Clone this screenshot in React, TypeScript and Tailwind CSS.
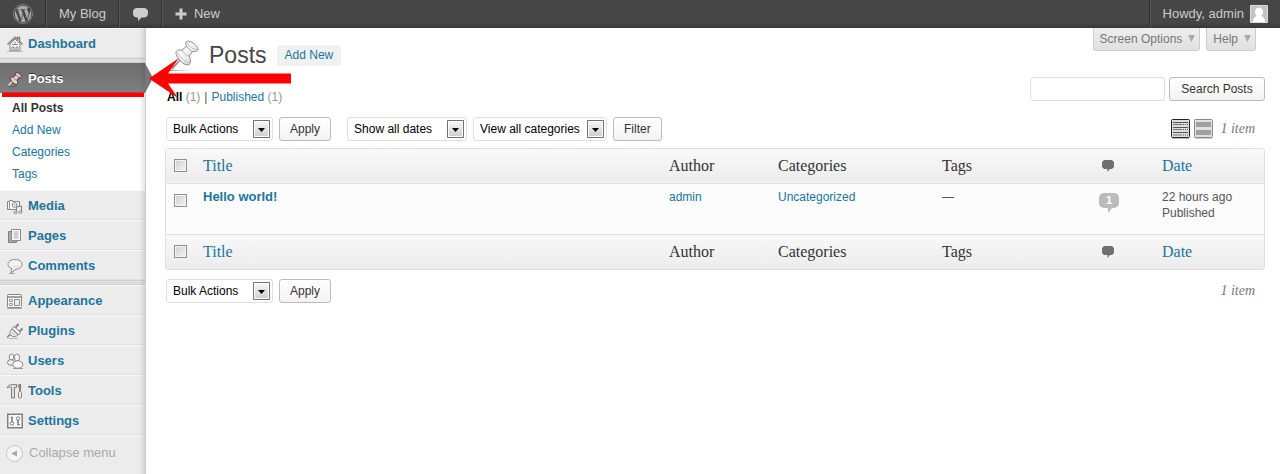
import React from 'react';
import { FaWordpress } from 'react-icons/fa';

const iconClass = 'h-4 w-4 shrink-0 overflow-visible';

const pinHead =
  'M7 13.500c0-2.500 3.500-3 6-2.300l4.500-4C16 5 16.500 3 18 2.300c3.500-1.300 10.500 4 11 8 .1 2-3 2.700-5.500 2.200L20 17c2 3 1.800 7.500 0 8.700-5 1.500-13-6.700-13-12.200z';

const icons: Record<string, React.ReactNode> = {
  Dashboard: (
    <>
      <path d="M3 8v7h10V8L8 3z" fill="#f6f6f6" stroke="#888" />
      <path d="M.5 8.500 8 1.200l2.500 2.400V1.500h2v4l3 3" stroke="#808080" strokeWidth="1.500" />
      <path d="M5 15v-4h2v4M9 15v-4h2v4M5 8.500h6M8 5.500v3" stroke="#888" />
      <path d="M0 15.500h16" stroke="#bbb" />
    </>
  ),
  Posts: (
    <>
      <path d="m1.500 14.500 5-5.500" stroke="#f0e0dd" strokeWidth="1.300" />
      <g transform="translate(0 .5) scale(.5)">
        <path d={pinHead} fill="#ecd2cd" stroke="#4a3836" strokeWidth="2" />
        <path d="M18 6c2 4 5 6 9 6M13 12c1.500 3 4 5 6.500 5.500" stroke="#6e5955" strokeWidth="1.500" />
      </g>
      <path d="M1 15.500h9" stroke="#444" opacity=".4" />
    </>
  ),
  Media: (
    <>
      <path d="M.5 3.500h2v-1h3v1h7v8h-12z" fill="#f5f5f5" stroke="#888" />
      <path d="M2.500 4v7" stroke="#999" />
      <circle cx="7.500" cy="7" r="2.300" fill="#fff" stroke="#888" />
      <circle cx="7.500" cy="7" r=".8" fill="#888" />
      <path d="M9.500 14.500V9l5-1v5.500" fill="#eee" stroke="#808080" />
      <ellipse cx="8.500" cy="14.500" rx="1.600" ry="1.200" fill="#eee" stroke="#808080" />
      <ellipse cx="13.500" cy="14" rx="1.600" ry="1.200" fill="#eee" stroke="#808080" />
    </>
  ),
  Pages: (
    <>
      <path d="M1.500 3.500h8v11h-8z" fill="#aaa" stroke="#808080" />
      <path d="M4.500 1.500h9v11h-9z" fill="#fbfbfb" stroke="#888" />
      <path d="M6.500 4h5M6.500 6h5M6.500 8h5M6.500 10h5" stroke="#a6a6a6" />
    </>
  ),
  Comments: (
    <>
      <path d="M8 1.500c4.200 0 7 2 7 4.800s-2.600 4.700-6 4.900L4 15l.9-4.300C2.400 9.900 1 8.300 1 6.300c0-2.800 2.800-4.800 7-4.800z" fill="#f3f3f3" stroke="#888" />
      <path d="M3 7c1.500 2 7 2 10 0-1 3-8 3.500-10 0z" fill="#d2d2d2" />
      <path d="M2 15.500h6" stroke="#aaa" />
    </>
  ),
  Appearance: (
    <>
      <rect x=".5" y="1.500" width="14" height="13" rx="1" fill="#fafafa" stroke="#858585" />
      <path d="M1 4h13" stroke="#858585" strokeWidth="1.500" />
      <path d="M2.500 6.500h3v2h-3zM2.500 10.500h3v2h-3z" stroke="#999" />
      <path d="M7.500 6.500h5v6h-5z" fill="#eee" stroke="#8b8b8b" />
      <path d="M0 15.500h15" stroke="#aaa" />
    </>
  ),
  Plugins: (
    <>
      <path d="M.5 15C1 12 2 12.500 4 11.500" stroke="#888" strokeWidth="1.500" />
      <path d="m5 6 6 6c-2 2-5 2-7 .5S3.200 8 5 6z" fill="#eee" stroke="#808080" />
      <path d="m5 5.500 2-2 6.500 6-2 2.500z" fill="#fafafa" stroke="#808080" />
      <path d="m8.500 4.500 3-3.500M12.500 8.500l3-3" stroke="#858585" strokeWidth="2" />
      <path d="m5 9 3 3M7 7l3.500 3.500" stroke="#aaa" />
      <path d="M2 15.500h9" stroke="#bbb" />
    </>
  ),
  Users: (
    <>
      <ellipse cx="4.500" cy="4" rx="2.300" ry="3" fill="#f5f5f5" stroke="#888" />
      <ellipse cx="4" cy="9.500" rx="3.500" ry="2.800" fill="#f0f0f0" stroke="#888" />
      <ellipse cx="10" cy="4.500" rx="2.600" ry="3.500" fill="#fafafa" stroke="#888" />
      <ellipse cx="10.800" cy="11.500" rx="5" ry="3.800" fill="#f6f6f6" stroke="#888" />
      <path d="M6 15.500h10" stroke="#999" />
    </>
  ),
  Tools: (
    <>
      <path d="M.5 4c1-2 3-2.500 9-2.500v3H7.500V15h-3V4.500C3 4 2 4 .5 5z" fill="#ddd" stroke="#808080" />
      <path d="M13 1v7" stroke="#808080" strokeWidth="2" />
      <path d="M10.500 2h1v2h3" stroke="#888" />
      <rect x="11.500" y="8.500" width="3" height="6.500" rx="1" fill="#eee" stroke="#858585" />
    </>
  ),
  Settings: (
    <>
      <rect x=".75" y="1.250" width="14.500" height="13.500" fill="#fafafa" stroke="#808080" strokeWidth="1.500" />
      <path d="M5 3.500v6M11 7v5.500" stroke="#777" strokeWidth="1.500" />
      <circle cx="5" cy="10.500" r="1.700" fill="#fff" stroke="#777" />
      <circle cx="11" cy="5.500" r="1.700" fill="#fff" stroke="#777" />
      <path d="M3.500 4.500h1M11 11.500h2" stroke="#888" />
    </>
  ),
};

function MenuIcon({ name }: { name: string }) {
  return (
    <svg viewBox="0 0 16 16" fill="none" className={iconClass} aria-hidden="true">
      {icons[name]}
    </svg>
  );
}

function MenuItem({ name }: { name: string }) {
  return (
    <li>
      <a
        href="#"
        className="flex h-[30px] items-center gap-[5px] border-t border-b border-t-[#f9f9f9] border-b-[#dfdfdf] pt-[2px] pl-[7px] text-[13px] font-bold text-[#21759b]"
      >
        <MenuIcon name={name} />
        {name}
      </a>
    </li>
  );
}

function Separator() {
  return <li className="h-[5px] border-y border-[#cfcfcf] bg-[#dfdfdf]" aria-hidden="true" />;
}

function Sidebar() {
  return (
    <nav className="relative w-[146px] shrink-0 border-r border-[#ccc] bg-[#ececec] text-[13px]">
      <ul>
        <MenuItem name="Dashboard" />
        <Separator />
        <li className="relative">
          <a
            href="#"
            className="relative flex h-[30px] items-center gap-[5px] bg-linear-to-b from-[#6d6d6d] to-[#808080] pt-[2px] pl-[7px] font-bold text-white [text-shadow:0_-1px_0_#333]"
          >
            <MenuIcon name="Posts" />
            Posts
          </a>
          <svg viewBox="0 0 8 30" className="absolute top-0 left-full z-20 h-[30px] w-2" aria-hidden="true">
            <path d="M0 0 8 15 0 30z" fill="#777" />
          </svg>
          <ul className="bg-white pt-1 pb-[5px] text-xs leading-[22px] text-[#21759b]">
            <li>
              <a href="#" className="block pl-3 font-bold text-[#333]">All Posts</a>
            </li>
            <li>
              <a href="#" className="block pl-3">Add New</a>
            </li>
            <li>
              <a href="#" className="block pl-3">Categories</a>
            </li>
            <li>
              <a href="#" className="block pl-3">Tags</a>
            </li>
          </ul>
        </li>
        <MenuItem name="Media" />
        <MenuItem name="Pages" />
        <MenuItem name="Comments" />
        <Separator />
        <MenuItem name="Appearance" />
        <MenuItem name="Plugins" />
        <MenuItem name="Users" />
        <MenuItem name="Tools" />
        <MenuItem name="Settings" />
      </ul>
      <button type="button" className="flex h-[35px] w-full items-center gap-[6px] border-t border-[#f9f9f9] pl-[6px] text-[#aaa]">
        <svg viewBox="0 0 17 17" className="h-[17px] w-[17px]" aria-hidden="true">
          <circle cx="8.500" cy="8.500" r="8" fill="#f5f5f5" stroke="#c4c4c4" />
          <path d="M5 8.500 11 5.500v6z" fill="#aaa" />
        </svg>
        Collapse menu
      </button>
      <div className="pointer-events-none absolute inset-y-0 right-0 w-[6px] bg-linear-to-r from-transparent to-black/10" />
    </nav>
  );
}

function AdminBar() {
  return (
    <header className="flex h-7 items-stretch bg-linear-to-b from-[#464646] from-80% to-[#373737] text-[13px] text-[#ccc]">
      <a href="#" aria-label="About WordPress" className="flex w-[46px] items-center justify-center border-r border-[#333] text-[#aaa]">
        <FaWordpress size={20} />
      </a>
      <a href="#" className="flex items-center border-r border-l border-r-[#333] border-l-[#555] px-3">
        My Blog
      </a>
      <a href="#" aria-label="Comments" className="flex w-[43px] items-center justify-center border-r border-l border-r-[#333] border-l-[#555]">
        <svg viewBox="0 0 15 13" className="h-[13px] w-[15px]" fill="#ccc" aria-hidden="true">
          <path d="M4 0h7c2 0 4 1.600 4 4v1.500c0 2.400-2 4-4 4H8.500L5 13V9.500H4c-2.300 0-4-1.600-4-4V4c0-2.400 1.700-4 4-4z" />
        </svg>
      </a>
      <a href="#" className="flex items-center gap-[7px] border-l border-[#555] px-3">
        <svg viewBox="0 0 12 12" className="h-3 w-3" aria-hidden="true">
          <path d="M6 .5v11M.5 6h11" stroke="#ccc" strokeWidth="3" />
        </svg>
        New
      </a>
      <a href="#" className="ml-auto flex items-center gap-[6px] border-l border-[#333] pr-3 pl-[13px] shadow-[inset_1px_0_0_#555]">
        Howdy, admin
        <svg viewBox="0 0 18 18" className="h-[18px] w-[18px]" aria-hidden="true">
          <path d="M.5.5h17v17H.5z" fill="#c3c3c3" stroke="#ddd" />
          <ellipse cx="9" cy="7" rx="4" ry="4.500" fill="#fff" />
          <path d="M3 17c0-4 2-5.500 4-6h4c2 .5 4 2 4 6z" fill="#fff" />
        </svg>
      </a>
    </header>
  );
}

function ArrowButton() {
  return (
    <svg viewBox="0 0 17 18" className="pointer-events-none absolute top-[3px] right-[3px] h-[18px] w-[17px]" aria-hidden="true">
      <defs>
        <linearGradient id="arrow-face" x1="0" y1="0" x2="0" y2="1">
          <stop offset="0" stopColor="#f4f4f4" />
          <stop offset="1" stopColor="#cfcfcf" />
        </linearGradient>
      </defs>
      <path d="M.5.500h16v17H.5z" fill="#fff" stroke="#707070" />
      <path d="M2 2h13v14H2z" fill="url(#arrow-face)" />
      <path d="M5 8h7l-3.500 4z" fill="#000" />
    </svg>
  );
}

function Dropdown({ label, name, width }: { label: string; name: string; width: string }) {
  return (
    <span className={`relative h-6 ${width}`}>
      <select
        aria-label={name}
        className="block h-6 w-full appearance-none rounded-[3px] border border-[#dfdfdf] bg-white pl-[6px] text-xs text-black"
      >
        <option>{label}</option>
      </select>
      <ArrowButton />
    </span>
  );
}

function Button({ children }: { children: React.ReactNode }) {
  return (
    <button
      type="button"
      className="h-6 rounded-[3px] border border-[#bbb] bg-linear-to-b from-white to-[#f3f3f3] px-[10px] text-xs whitespace-nowrap text-[#333]"
    >
      {children}
    </button>
  );
}

function CheckBox({ label }: { label: string }) {
  return (
    <input
      type="checkbox"
      aria-label={label}
      className="block h-[13px] w-[13px] appearance-none border border-[#8e8f8f] bg-linear-to-br from-[#c9cdd5] to-[#f6f6f6] shadow-[inset_0_0_0_1px_#f4f4f4]"
    />
  );
}

function HeadRow({ bottom = false }: { bottom?: boolean }) {
  return (
    <tr
      className={
        bottom
          ? 'h-[35px] bg-linear-to-b from-[#f9f9f9] to-[#ececec] text-left'
          : 'h-[34px] border-b border-[#dfdfdf] bg-linear-to-b from-[#f9f9f9] to-[#ececec] text-left'
      }
    >
      <th className="pl-2">
        <CheckBox label="Select all" />
      </th>
      <th className="pl-2 font-normal">
        <a href="#" className="text-[#21759b]">Title</a>
      </th>
      <th className="pl-2 font-normal">Author</th>
      <th className="pl-2 font-normal">Categories</th>
      <th className="pl-2 font-normal">Tags</th>
      <th className="pl-3">
        <svg viewBox="0 0 12 12" className="h-3 w-3" fill="#707070" role="img" aria-label="Comments">
          <path d="M2 0h8l2 2v5l-2 2H8l-2.500 3V9H2L0 7V2z" />
        </svg>
      </th>
      <th className="pl-2 font-normal">
        <a href="#" className="text-[#21759b]">Date</a>
      </th>
    </tr>
  );
}

function PostsTable() {
  return (
    <div className="mt-[7px] overflow-hidden rounded-[3px] border border-[#dfdfdf] bg-[#fcfcfc]">
      <table className="w-full table-fixed border-collapse">
        <colgroup>
          <col className="w-[29px]" />
          <col />
          <col className="w-[109px]" />
          <col className="w-[164px]" />
          <col className="w-[156px]" />
          <col className="w-[64px]" />
          <col className="w-[110px]" />
        </colgroup>
        <thead className="font-['Liberation_Serif',serif] text-base leading-5">
          <HeadRow />
        </thead>
        <tbody className="text-xs leading-4">
          <tr className="h-[51px] border-b border-[#dfdfdf] align-top">
            <td className="pt-[10px] pl-2">
              <CheckBox label="Select Hello world!" />
            </td>
            <td className="pt-[5px] pl-2 text-[13px]">
              <a href="#" className="font-bold text-[#21759b]">Hello world!</a>
            </td>
            <td className="pt-[5px] pl-2">
              <a href="#" className="text-[#21759b]">admin</a>
            </td>
            <td className="pt-[5px] pl-2">
              <a href="#" className="text-[#21759b]">Uncategorized</a>
            </td>
            <td className="pt-[5px] pl-2 text-[#555]">—</td>
            <td className="pt-[9px] pl-[9px]">
              <a href="#" className="relative flex h-[15px] w-5 justify-center rounded-[5px] bg-[#bbb] text-[11px] leading-[15px] font-bold text-white">
                1
                <svg viewBox="0 0 5 5" className="absolute top-full left-[9px] h-[5px] w-[5px]" aria-hidden="true">
                  <path d="M0 0h4L0 5z" fill="#bbb" />
                </svg>
              </a>
            </td>
            <td className="pt-[5px] pl-2 text-[#555]">
              22 hours ago
              <br />
              Published
            </td>
          </tr>
        </tbody>
        <tfoot className="font-['Liberation_Serif',serif] text-base leading-5">
          <HeadRow bottom />
        </tfoot>
      </table>
    </div>
  );
}

function ItemCount() {
  return <span className="font-['Liberation_Serif',serif] text-sm text-[#777] italic">1 item</span>;
}

function PinIcon() {
  return (
    <svg viewBox="0 0 32 32" className="mt-[11px] h-8 w-8" fill="none" aria-hidden="true">
      <defs>
        <linearGradient id="pin-body" x1="0" y1="0" x2="1" y2="1">
          <stop offset="0" stopColor="#fff" />
          <stop offset=".6" stopColor="#eee" />
          <stop offset="1" stopColor="#bbb" />
        </linearGradient>
        <linearGradient id="pin-shadow" x1="0" y1="0" x2="1" y2="0">
          <stop offset="0" stopColor="#999" />
          <stop offset="1" stopColor="#fff" />
        </linearGradient>
      </defs>
      <path d="M1 31h22v1H1z" fill="url(#pin-shadow)" />
      <path d="m3 30 9-10" stroke="#888" strokeWidth="1.500" />
      <path d={pinHead} fill="url(#pin-body)" stroke="#8c8c8c" />
      <path d="M17.500 7c2 3 4 5 6.500 5.500" stroke="#a5a5a5" />
      <path d="M18.500 4c1.500 3.500 5.500 6.500 10 6.700M13 11.200c1.500 3 4 5.300 7 5.800M8.500 13.500c2 4 6.500 9 11.500 10.200" stroke="#bdbdbd" />
      <path d="m16 12.500 3-2.700M20 4.500l4 3M10.500 13l3 4" stroke="#fff" strokeWidth="1.500" />
    </svg>
  );
}

function ScreenTab({ children }: { children: React.ReactNode }) {
  return (
    <button
      type="button"
      className="flex h-[23px] items-center gap-[6px] rounded-b-[3px] border border-t-0 border-[#ccc] bg-linear-to-b from-[#eee] to-[#e0e0e0] pr-1 pb-px pl-[6px] text-xs text-[#777]"
    >
      {children}
      <svg viewBox="0 0 7 7" className="h-[7px] w-[7px]" aria-hidden="true">
        <path d="M0 0h7L3.500 7z" fill="#aaa" />
      </svg>
    </button>
  );
}

function ViewModes() {
  return (
    <div className="flex gap-1">
      <button type="button" aria-label="List view">
        <svg viewBox="0 0 19 20" className="block h-5 w-[19px]" fill="none">
          <rect x=".5" y=".5" width="18" height="18" rx="1" fill="#ddd" stroke="#222" />
          <path d="M2 3.500h15M2 8.500h15M2 13.500h15" stroke="#555" />
          <path d="M2 5.500h9M2 10.500h9M2 16h9" stroke="#777" />
          <path d="M12 5.500h5M12 10.500h5M12 16h5" stroke="#555" strokeDasharray="1 1" />
          <path d="M1 19.500h17" stroke="#bbb" />
        </svg>
      </button>
      <button type="button" aria-label="Excerpt view">
        <svg viewBox="0 0 19 20" className="block h-5 w-[19px]" fill="none">
          <rect x=".5" y=".5" width="18" height="18" rx="1" fill="#e2e2e2" stroke="#888" />
          <path d="M2 3h15v5H2zM2 11h15v5H2z" fill="#a0a0a0" />
          <path d="M1 19.500h17" stroke="#ccc" />
        </svg>
      </button>
    </div>
  );
}

export default function App() {
  return (
    <div className="relative flex min-h-screen flex-col bg-white font-['Liberation_Sans',Arial,sans-serif] text-xs text-[#333]">
      <AdminBar />
      <div className="flex flex-1">
        <Sidebar />
        <main className="min-w-0 flex-1 pr-[15px] pl-[19px]">
          <div className="flex h-[49px] items-start justify-between">
            <div className="flex items-start pl-1">
              <PinIcon />
              <h1 className="mt-[13px] ml-2 text-[23px] leading-7 text-[#464646]">Posts</h1>
              <a href="#" className="mt-[17px] ml-[10px] rounded-[3px] bg-[#f1f1f1] px-2 leading-[21px] text-[#21759b]">
                Add New
              </a>
            </div>
            <div className="flex gap-[6px] pr-[9px]">
              <ScreenTab>Screen Options</ScreenTab>
              <ScreenTab>Help</ScreenTab>
            </div>
          </div>
          <div className="flex h-7 items-start justify-between">
            <ul className="flex gap-1 self-end pl-[2px] leading-4 text-[#999]">
              <li>
                <a href="#"><b className="text-black">All</b> (1)</a>
              </li>
              <li className="text-[#555]">|</li>
              <li>
                <a href="#"><span className="text-[#21759b]">Published</span> (1)</a>
              </li>
            </ul>
            <form className="grid grid-cols-[135px_96px] gap-1">
              <input type="search" aria-label="Search posts" className="h-6 min-w-0 rounded-[3px] border border-[#dfdfdf] bg-white px-1" />
              <Button>Search Posts</Button>
            </form>
          </div>
          <div className="mt-3 flex items-center justify-between pl-px">
            <div className="flex gap-[6px]">
              <Dropdown label="Bulk Actions" name="Bulk actions" width="w-[107px]" />
              <Button>Apply</Button>
              <span className="ml-[10px] flex gap-[6px]">
                <Dropdown label="Show all dates" name="Filter by date" width="w-[120px]" />
                <Dropdown label="View all categories" name="Filter by category" width="w-[134px]" />
              </span>
              <Button>Filter</Button>
            </div>
            <div className="flex items-center gap-[7px] pr-[10px]">
              <ViewModes />
              <ItemCount />
            </div>
          </div>
          <PostsTable />
          <div className="mt-[9px] flex items-center justify-between pl-px">
            <div className="flex gap-[6px]">
              <Dropdown label="Bulk Actions" name="Bulk actions, bottom" width="w-[107px]" />
              <Button>Apply</Button>
            </div>
            <div className="pr-[10px]">
              <ItemCount />
            </div>
          </div>
        </main>
      </div>
      <svg viewBox="0 0 292 42" className="pointer-events-none absolute top-[57px] left-0 z-30 h-[42px] w-[292px]" fill="#f00" aria-hidden="true">
        <path d="M2 35.500h142v4.500H2z" />
        <path d="M149 21.500 179 1l-11 15.500h123v10H168L178 41z" />
      </svg>
    </div>
  );
}
